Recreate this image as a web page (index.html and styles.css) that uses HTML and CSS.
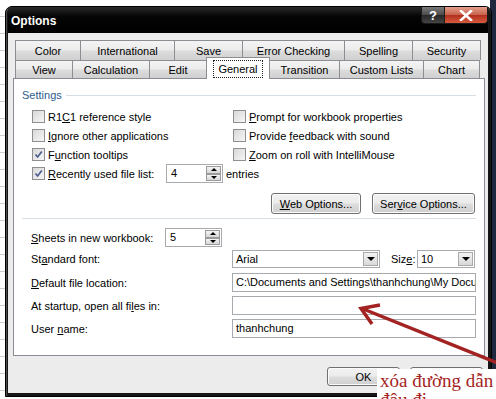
FILE: index.html
```html
<!DOCTYPE html>
<html lang="en">
<head>
    <meta charset="UTF-8">
    <title>Options</title>
    <link rel="stylesheet" href="styles.css">
</head>
<body>
    <div class="desktop">
        <div class="window">
            <div class="titlebar">
                <span class="title">Options</span>
                <div class="caption-buttons">
                    <span class="cap-btn help">?</span>
                    <span class="cap-btn close">
                        <svg width="14" height="11" viewBox="0 0 14 11"><path d="M2 1 L12 10 M12 1 L2 10" stroke="#fff" stroke-width="2.6" stroke-linecap="square"/></svg>
                    </span>
                </div>
            </div>

            <div class="client">
                <div class="tabs">
                    <div class="tab-row back">
                        <span class="tab t-color">Color</span>
                        <span class="tab t-intl">International</span>
                        <span class="tab t-save">Save</span>
                        <span class="tab t-error">Error Checking</span>
                        <span class="tab t-spell">Spelling</span>
                        <span class="tab t-sec">Security</span>
                    </div>
                    <div class="tab-row front">
                        <span class="tab t-view">View</span>
                        <span class="tab t-calc">Calculation</span>
                        <span class="tab t-edit">Edit</span>
                        <span class="tab t-general selected"><span class="focus">General</span></span>
                        <span class="tab t-trans">Transition</span>
                        <span class="tab t-custom">Custom Lists</span>
                        <span class="tab t-chart">Chart</span>
                    </div>
                </div>

                <div class="panel">
                    <div class="group-head">
                        <span class="group-title">Settings</span>
                        <span class="group-line"></span>
                    </div>

                    <div class="checks">
                        <label class="check"><span class="box"></span><span>R1<u>C</u>1 reference style</span></label>
                        <label class="check"><span class="box"></span><span><u>P</u>rompt for workbook properties</span></label>
                        <label class="check"><span class="box"></span><span><u>I</u>gnore other applications</span></label>
                        <label class="check"><span class="box"></span><span>Provide <u>f</u>eedback with sound</span></label>
                        <label class="check"><span class="box checked"><svg width="11" height="11" viewBox="0 0 11 11"><path d="M2.5 5.5 L4.6 8 L8.8 2.5" fill="none" stroke="#4d5f91" stroke-width="1.7"/></svg></span><span>F<u>u</u>nction tooltips</span></label>
                        <label class="check"><span class="box"></span><span><u>Z</u>oom on roll with IntelliMouse</span></label>
                        <div class="check recent">
                            <span class="box checked"><svg width="11" height="11" viewBox="0 0 11 11"><path d="M2.5 5.5 L4.6 8 L8.8 2.5" fill="none" stroke="#4d5f91" stroke-width="1.7"/></svg></span>
                            <span class="recent-label"><u>R</u>ecently used file list:</span>
                            <span class="spin">
                                <span class="spin-val">4</span>
                                <span class="spin-btns"><span class="sb up"></span><span class="sb down"></span></span>
                            </span>
                            <span>entries</span>
                        </div>
                    </div>

                    <div class="btn-row">
                        <span class="btn web"><span><u>W</u>eb Options...</span></span>
                        <span class="btn service"><span>Ser<u>v</u>ice Options...</span></span>
                    </div>

                    <div class="sep"></div>

                    <div class="form-row sheets">
                        <span class="form-label short"><u>S</u>heets in new workbook:</span>
                        <span class="spin">
                            <span class="spin-val">5</span>
                            <span class="spin-btns"><span class="sb up"></span><span class="sb down"></span></span>
                        </span>
                    </div>
                    <div class="form-row font">
                        <span class="form-label">St<u>a</u>ndard font:</span>
                        <span class="select font-select"><span class="select-val">Arial</span><span class="dd"></span></span>
                        <span class="size-label">Siz<u>e</u>:</span>
                        <span class="select size-select"><span class="select-val">10</span><span class="dd"></span></span>
                    </div>
                    <div class="form-row location">
                        <span class="form-label"><u>D</u>efault file location:</span>
                        <span class="field">C:\Documents and Settings\thanhchung\My Documents</span>
                    </div>
                    <div class="form-row startup">
                        <span class="form-label">At startup, open all fi<u>l</u>es in:</span>
                        <span class="field"></span>
                    </div>
                    <div class="form-row user">
                        <span class="form-label">User <u>n</u>ame:</span>
                        <span class="field">thanhchung</span>
                    </div>
                </div>

                <div class="footer">
                    <span class="btn ok">OK</span>
                    <span class="btn cancel">Cancel</span>
                </div>
            </div>
        </div>

        <!-- hand-drawn note on top of the screenshot -->
        <svg class="arrow" width="496" height="399" viewBox="0 0 496 399">
            <path d="M362 308.5 L500 364" stroke="#a32222" stroke-width="3.5" fill="none"/>
            <path d="M380 305 L361 308.5 L372 324" stroke="#a32222" stroke-width="3.5" fill="none" stroke-linejoin="miter"/>
        </svg>
        <div class="note">xóa đường dẫn<br>đâu đi</div>
    </div>
</body>
</html>
```

FILE: styles.css
```css
* {
    box-sizing: border-box;
}

body {
    margin: 0;
    font-family: "Liberation Sans", Arial, sans-serif;
    font-size: 11px;
    color: #000;
}

u {
    text-decoration: underline;
    text-underline-offset: 1px;
}

.desktop {
    position: relative;
    width: 496px;
    height: 399px;
    overflow: hidden;
    padding: 6px 0 0 5px;
    background:
        linear-gradient(to right, transparent 490px, #1e2940 490px),
        repeating-linear-gradient(to bottom, #fff 0 16px, #cfcfcf 16px 17px);
}

/* window frame */
.window {
    width: 487px;
    height: 391px;
    display: flex;
    flex-direction: column;
    background: #161616;
    border: 1px solid #000;
    border-radius: 7px 7px 0 0;
    padding: 0 3px 3px 2px;
    box-shadow: inset 0 1px 0 #6a6a6a, inset 1px 0 0 #4a4a4a;
}

.titlebar {
    height: 26px;
    display: flex;
    justify-content: space-between;
    align-items: flex-start;
    background: linear-gradient(#2a2a2a, #050505 35%, #000);
}

.title {
    color: #fff;
    font-weight: bold;
    font-size: 12px;
    padding: 7px 0 0 3px;
}

.caption-buttons {
    display: flex;
}

.cap-btn {
    height: 17px;
    display: flex;
    align-items: center;
    justify-content: center;
    color: #fff;
    font-weight: bold;
    font-size: 13px;
    border: 1px solid #1a1a1a;
    border-top: none;
}

.help {
    width: 24px;
    border-radius: 0 0 0 4px;
    background: linear-gradient(#7a7a7a, #4a4a4a 50%, #262626 50%, #444);
}

.close {
    width: 43px;
    border-left: none;
    border-radius: 0 0 4px 0;
    background: linear-gradient(#e4a08c, #c8604a 50%, #b02e1c 50%, #d65a3e);
}

/* client area */
.client {
    flex: 1;
    background: #ececec;
    padding: 7px 3px 0 5px;
}

.tabs {
    margin-left: 2px;
}

.tab-row {
    display: flex;
}

.tab-row.back {
    height: 20px;
}

.tab-row.front {
    height: 18px;
    align-items: flex-end;
}

.tab {
    height: 100%;
    display: flex;
    align-items: center;
    justify-content: center;
    border-top: 1px solid #8c8e94;
    border-right: 1px solid #8c8e94;
    background: linear-gradient(#f4f4f4, #ececec 45%, #dcdcdc 55%, #d0d0d0);
}

.tab:first-child {
    border-left: 1px solid #8c8e94;
}

.t-color { width: 66px; }
.t-intl { width: 94px; }
.t-save { width: 68px; }
.t-error { width: 102px; }
.t-spell { width: 68px; }
.t-sec { width: 68px; }

.t-view { width: 58px; }
.t-calc { width: 77px; }
.t-edit { width: 57px; }
.t-general { width: 64px; }
.t-trans { width: 70px; }
.t-custom { width: 84px; }
.t-chart { width: 56px; }

.tab.selected {
    position: relative;
    z-index: 2;
    height: 22px;
    margin-left: -1px;
    margin-bottom: -1px;
    border-left: 1px solid #8c8e94;
    background: #fff;
    padding-top: 1px;
}

.focus {
    border: 1px dotted #222;
    padding: 2px 4px;
    line-height: 12px;
}

/* tab page */
.panel {
    width: 472px;
    height: 278px;
    border: 1px solid #898c95;
    background: #fff;
    padding-top: 8px;
}

.group-head {
    height: 16px;
    display: flex;
    align-items: center;
    padding: 0 8px;
}

.group-title {
    color: #2c5c8e;
}

.group-line {
    flex: 1;
    height: 1px;
    margin-left: 4px;
    background: #d5dfe5;
}

.checks {
    display: grid;
    grid-template-columns: 201px 1fr;
    grid-auto-rows: 19px;
    margin-top: 4px;
    padding-left: 18px;
}

.check {
    display: flex;
    align-items: center;
    gap: 3px;
}

.check.recent {
    grid-column: span 2;
}

.recent-label {
    width: 115px;
}

.box {
    width: 13px;
    height: 13px;
    display: flex;
    align-items: center;
    justify-content: center;
    border: 1px solid #8f8f8f;
    background: linear-gradient(135deg, #d8d8d8, #f6f6f6);
}

.spin {
    width: 57px;
    height: 19px;
    display: flex;
    border: 1px solid #a7abb0;
    background: #fff;
}

.spin-val {
    flex: 1;
    padding-left: 4px;
    line-height: 17px;
}

.spin-btns {
    width: 16px;
    display: flex;
    flex-direction: column;
    padding: 1px 1px 1px 0;
}

.sb {
    flex: 1;
    display: flex;
    align-items: center;
    justify-content: center;
    border: 1px solid #9a9a9a;
    background: linear-gradient(#f4f4f4, #d6d6d6);
}

.sb.up::after {
    content: "";
    border-left: 3px solid transparent;
    border-right: 3px solid transparent;
    border-bottom: 3px solid #000;
}

.sb.down::after {
    content: "";
    border-left: 3px solid transparent;
    border-right: 3px solid transparent;
    border-top: 3px solid #000;
}

.btn {
    height: 21px;
    display: flex;
    align-items: center;
    justify-content: center;
    border: 1px solid #707070;
    border-radius: 3px;
    background: linear-gradient(#f2f2f2, #ebebeb 48%, #dddddd 52%, #cfcfcf);
    box-shadow: inset 0 0 0 1px #fbfbfb;
}

.btn-row {
    display: flex;
    justify-content: flex-end;
    gap: 11px;
    margin-top: 10px;
    padding-right: 9px;
}

.btn.web { width: 90px; }
.btn.service { width: 103px; }

.sep {
    height: 1px;
    margin: 4px 8px 0 8px;
    background: #d5dfe5;
}

.form-row {
    height: 19px;
    display: flex;
    align-items: center;
    padding-left: 17px;
}

.form-row.sheets { margin-top: 9px; }
.form-row.font { margin-top: 3px; height: 18px; }
.form-row.location { margin-top: 5px; }
.form-row.startup { margin-top: 4px; }
.form-row.user { margin-top: 4px; }

.form-label {
    width: 201px;
}

.form-label.short {
    width: 134px;
}

.select {
    height: 18px;
    display: flex;
    border: 1px solid #a7abb0;
    background: #fff;
    padding: 1px;
}

.select-val {
    flex: 1;
    padding-left: 2px;
    line-height: 14px;
}

.font-select { width: 148px; }
.size-select { width: 58px; }

.size-label {
    width: 26px;
    margin-left: 11px;
}

.dd {
    width: 15px;
    display: flex;
    align-items: center;
    justify-content: center;
    border: 1px solid #a9a9a9;
    background: linear-gradient(#f3f3f3, #d8d8d8);
}

.dd::after {
    content: "";
    border-left: 4px solid transparent;
    border-right: 4px solid transparent;
    border-top: 4px solid #000;
}

.field {
    width: 244px;
    height: 19px;
    border: 1px solid #a7abb0;
    background: #fff;
    padding-left: 3px;
    line-height: 17px;
    white-space: nowrap;
    overflow: hidden;
}

.footer {
    display: flex;
    justify-content: flex-end;
    gap: 10px;
    margin-top: 11px;
    padding-right: 2px;
}

.btn.ok,
.btn.cancel {
    width: 73px;
    height: 19px;
}

/* red annotation drawn over the dialog */
.arrow {
    position: absolute;
    left: 0;
    top: 0;
}

.note {
    position: absolute;
    left: 377px;
    top: 369px;
    width: 119px;
    height: 30px;
    padding: 2px 0 0 3px;
    background: #fff;
    color: #a51f1f;
    font-family: "Liberation Serif", "Times New Roman", serif;
    font-size: 19px;
    line-height: 19px;
    white-space: nowrap;
}
```
